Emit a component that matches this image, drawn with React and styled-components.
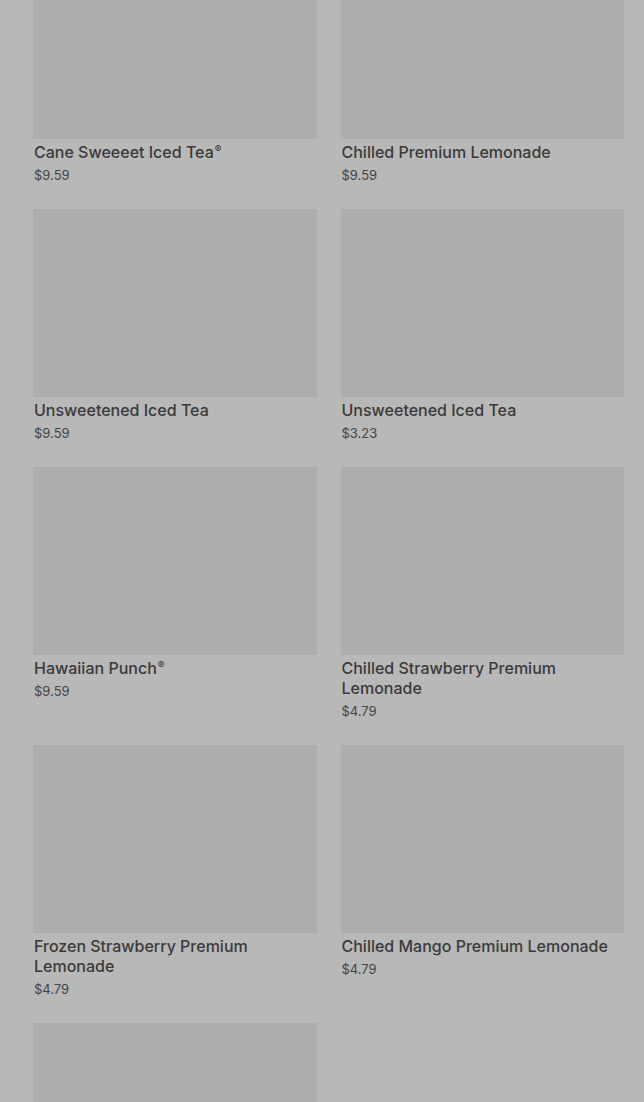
import React from 'react'
import styled, {createGlobalStyle} from 'styled-components'

const items = [
	{name: 'Cane Sweeeet Iced Tea', mark: true, price: '$9.59'},
	{name: 'Chilled Premium Lemonade', price: '$9.59'},
	{name: 'Unsweetened Iced Tea', price: '$9.59'},
	{name: 'Unsweetened Iced Tea', price: '$3.23'},
	{name: 'Hawaiian Punch', mark: true, price: '$9.59'},
	{name: 'Chilled Strawberry Premium Lemonade', price: '$4.79'},
	{name: 'Frozen Strawberry Premium Lemonade', price: '$4.79'},
	{name: 'Chilled Mango Premium Lemonade', price: '$4.79'},
	{name: '', price: ''},
]

const App = () => {
	return (
		<>
			<Global />
			<Page>
				<Grid>
					{items.map((item, i) => (
						<Card key={i}>
							<Thumb />
							{item.name && (
								<Title>
									{item.name}
									{item.mark && <Reg>®</Reg>}
								</Title>
							)}
							{item.price && <Price>{item.price}</Price>}
						</Card>
					))}
				</Grid>
			</Page>
		</>
	)
}

export default App

const Global = createGlobalStyle`
	html, body {
		margin: 0;
		padding: 0;
		background: #b8b8b8;
	}
	body {
		font-family: Inter, "Noto Sans", sans-serif;
		overflow: hidden;
	}
`

const Page = styled.div`
	height: 1102px;
	overflow: hidden;
	padding: 0 20px 0 33px;
`

const Grid = styled.div`
	margin-top: -49px;
	display: grid;
	grid-template-columns: 1fr 1fr;
	column-gap: 24px;
	row-gap: 25px;
	align-items: start;
`

const Card = styled.div`
	display: flex;
	flex-direction: column;
`

const Thumb = styled.div`
	height: 188px;
	background: #adadad;
`

const Title = styled.div`
	margin-top: 3px;
	font-size: 16px;
	line-height: 20px;
	font-weight: 500;
	color: #3a3a3a;
	padding-left: 1px;
`

const Reg = styled.span`
	font-size: 10px;
	vertical-align: 5px;
	line-height: 0;
	margin-left: 1px;
`

const Price = styled.div`
	margin-top: 4px;
	font-size: 13px;
	line-height: 18px;
	color: #444;
	padding-left: 1px;
`
